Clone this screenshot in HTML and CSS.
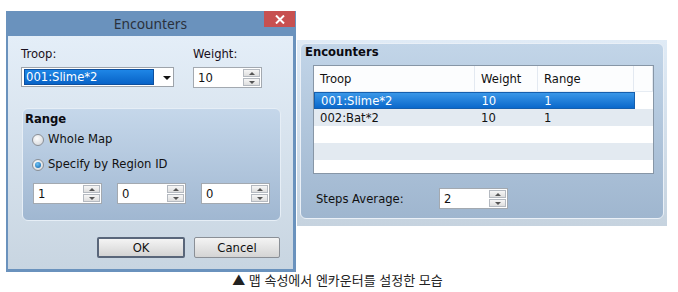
FILE: index.html
```html
<!DOCTYPE html>
<html lang="ko">
<head>
    <meta charset="UTF-8">
    <title>Encounters</title>
    <link rel="stylesheet" href="styles.css">
</head>
<body>
    <div class="stage">
        <div class="dialog">
            <div class="titlebar">
                <span class="title">Encounters</span>
                <span class="close">
                    <svg width="10" height="9" viewBox="0 0 10 9"><path d="M1 0.5 L9 8.5 M9 0.5 L1 8.5" stroke="#fff" stroke-width="2"/></svg>
                </span>
            </div>
            <div class="dialog-body">
                <div class="field-row">
                    <div class="field">
                        <label>Troop:</label>
                        <div class="combo">
                            <span class="combo-sel">001:Slime*2</span>
                            <span class="combo-arrow"></span>
                        </div>
                    </div>
                    <div class="field">
                        <label>Weight:</label>
                        <div class="spin">
                            <span class="spin-val">10</span>
                            <span class="spin-btns"><span class="spin-btn up"></span><span class="spin-btn down"></span></span>
                        </div>
                    </div>
                </div>

                <div class="range">
                    <div class="group-title">Range</div>
                    <div class="radio"><span class="radio-dot"></span>Whole Map</div>
                    <div class="radio"><span class="radio-dot checked"></span>Specify by Region ID</div>
                    <div class="region-row">
                        <div class="spin">
                            <span class="spin-val">1</span>
                            <span class="spin-btns"><span class="spin-btn up"></span><span class="spin-btn down"></span></span>
                        </div>
                        <div class="spin">
                            <span class="spin-val">0</span>
                            <span class="spin-btns"><span class="spin-btn up"></span><span class="spin-btn down"></span></span>
                        </div>
                        <div class="spin">
                            <span class="spin-val">0</span>
                            <span class="spin-btns"><span class="spin-btn up"></span><span class="spin-btn down"></span></span>
                        </div>
                    </div>
                </div>

                <div class="buttons">
                    <button class="btn default">OK</button>
                    <button class="btn cancel">Cancel</button>
                </div>
            </div>
        </div>

        <div class="panel-wrap">
            <div class="panel">
                <div class="group-title">Encounters</div>
                <div class="list">
                    <div class="list-head">
                        <span class="col c-troop">Troop</span>
                        <span class="col c-weight">Weight</span>
                        <span class="col c-range">Range</span>
                        <span class="col c-fill"></span>
                    </div>
                    <div class="list-row selected">
                        <span class="col c-troop">001:Slime*2</span>
                        <span class="col c-weight">10</span>
                        <span class="col c-range">1</span>
                    </div>
                    <div class="list-row alt">
                        <span class="col c-troop">002:Bat*2</span>
                        <span class="col c-weight">10</span>
                        <span class="col c-range">1</span>
                    </div>
                    <div class="list-row"></div>
                    <div class="list-row alt"></div>
                </div>
                <div class="steps-row">
                    <span class="steps-label">Steps Average:</span>
                    <div class="spin">
                        <span class="spin-val">2</span>
                        <span class="spin-btns"><span class="spin-btn up"></span><span class="spin-btn down"></span></span>
                    </div>
                </div>
            </div>
        </div>
    </div>

    <p class="caption">▲ 맵 속성에서 엔카운터를 설정한 모습</p>
</body>
</html>
```

FILE: styles.css
```css
* {
    margin: 0;
    padding: 0;
    box-sizing: border-box;
}

body {
    background: white;
    font-family: 'DejaVu Sans', Verdana, sans-serif;
    font-size: 11.6px;
    color: #111;
    width: 678px;
    height: 292px;
    overflow: hidden;
}

.stage {
    display: flex;
    align-items: flex-start;
    padding: 11px 0 0 6px;
}

/* dialog */
.dialog {
    width: 290px;
    height: 261px;
    background: #6a92bd;
    padding: 0 3px 3px 2px;
    display: flex;
    flex-direction: column;
}

.titlebar {
    position: relative;
    height: 25px;
    display: flex;
    align-items: center;
    justify-content: center;
}

.title {
    font-family: 'Noto Sans', 'Open Sans', sans-serif;
    font-size: 13.8px;
    color: #2a313c;
    margin-top: -1px;
}

.close {
    position: absolute;
    top: 0;
    right: -2px;
    width: 31px;
    height: 16px;
    background: #c75050;
    display: flex;
    align-items: center;
    justify-content: center;
}

.dialog-body {
    flex: 1;
    background: linear-gradient(#e4eef8, #c8d5e1);
    padding: 12px 13px 0 13px;
}

.field-row {
    display: flex;
    gap: 19px;
}

.field label {
    display: block;
    line-height: 13px;
    margin-bottom: 6px;
    color: #1a1020;
}

.combo {
    width: 153px;
    height: 20px;
    background: white;
    border: 1px solid #9da3aa;
    display: flex;
    align-items: center;
    padding: 0 2px;
}

.combo-sel {
    width: 130px;
    height: 16px;
    padding-left: 1px;
    color: white;
    background: linear-gradient(#1e86e6, #0863c7);
    border: 1px solid #0d4f9e;
    line-height: 14px;
}

.combo-arrow {
    margin-left: 9px;
    border-left: 4px solid transparent;
    border-right: 4px solid transparent;
    border-top: 4px solid #111;
    margin-top: 2px;
}

.spin {
    width: 69px;
    height: 21px;
    background: white;
    border: 1px solid #a3a9b0;
    display: flex;
    align-items: center;
    justify-content: space-between;
    padding: 0 1px 0 4px;
}

.spin-btns {
    display: flex;
    flex-direction: column;
    gap: 1px;
}

.spin-btn {
    width: 17px;
    height: 8px;
    border: 1px solid #b4b9c0;
    background: linear-gradient(#f6f6f6, #dedede);
    display: flex;
    align-items: center;
    justify-content: center;
}

.spin-btn::after {
    content: '';
    border-left: 3px solid transparent;
    border-right: 3px solid transparent;
}

.spin-btn.up::after {
    border-bottom: 3px solid #555;
}

.spin-btn.down::after {
    border-top: 3px solid #555;
}

/* range group */
.range {
    margin: 20px 0 0 1px;
    width: 259px;
    height: 113px;
    border: 1px solid #e6eef6;
    border-radius: 6px;
    background: linear-gradient(#c5d7ea, #a0b7d1);
    padding: 4px 0 0 2px;
}

.group-title {
    font-weight: bold;
    line-height: 13px;
    color: #0a0a10;
}

.radio {
    display: flex;
    align-items: center;
    gap: 4px;
    margin-left: 7px;
    height: 13px;
    line-height: 13px;
}

.range .radio:nth-of-type(2) {
    margin-top: 7px;
}

.range .radio:nth-of-type(3) {
    margin-top: 12px;
}

.radio-dot {
    width: 12px;
    height: 12px;
    border-radius: 50%;
    border: 1px solid #8a8f96;
    background: radial-gradient(circle at 40% 35%, #fdfdfd, #cfd2d6);
    display: flex;
    align-items: center;
    justify-content: center;
}

.radio-dot.checked::after {
    content: '';
    width: 6px;
    height: 6px;
    border-radius: 50%;
    background: radial-gradient(circle at 40% 35%, #6ec3f5, #0a5ea8);
}

.region-row {
    display: flex;
    gap: 15px;
    margin: 12px 0 0 8px;
}

.buttons {
    display: flex;
    justify-content: flex-end;
    gap: 9px;
    margin-top: 16px;
}

.btn {
    height: 21px;
    font-family: 'DejaVu Sans', Verdana, sans-serif;
    font-size: 11.6px;
    color: #111;
    background: linear-gradient(#f4f4f4, #e4e4e4 50%, #d4d4d4);
    border: 1px solid #8a8f96;
    border-radius: 2px;
}

.btn.default {
    width: 88px;
    border: 2px solid #59667a;
}

.btn.cancel {
    width: 86px;
}

/* right panel */
.panel-wrap {
    margin-top: 29px;
    margin-left: 1px;
    width: 370px;
    height: 186px;
    background: linear-gradient(#e0ebf6, #c6d3df);
    padding: 3px 3px 7px 3px;
}

.panel {
    height: 100%;
    border: 1px solid #eaf0f7;
    border-radius: 6px;
    background: linear-gradient(#c2d5e8, #9fb6cf);
    padding: 2px 9px 0 4px;
}

.list {
    margin: 6px 0 0 8px;
    height: 109px;
    background: white;
    border: 1px solid #8796a6;
    display: flex;
    flex-direction: column;
}

.list-head {
    display: flex;
    height: 26px;
    flex-shrink: 0;
    background: #fcfdfe;
    border-bottom: 1px solid #e6ecf3;
}

.list-head .col {
    border-right: 1px solid #e3e9f1;
    display: flex;
    align-items: center;
    padding-left: 6px;
    padding-top: 1px;
}

.list-row {
    display: flex;
    height: 17px;
    flex-shrink: 0;
    align-items: center;
}

.list-row .col {
    padding-left: 6px;
}

.c-troop { width: 161px; }
.c-weight { width: 63px; }
.c-range { width: 96px; }
.c-fill { width: 19px; }

.list-row.alt {
    background: #e3eaf1;
}

.list-row.selected {
    width: 321px;
    color: white;
    background: linear-gradient(#3a97e8, #0a68cb);
    border: 1px solid #155fae;
}

.steps-row {
    display: flex;
    align-items: center;
    margin: 14px 0 0 11px;
}

.steps-label {
    width: 123px;
}

.caption {
    font-family: 'Noto Sans CJK KR', sans-serif;
    font-size: 13px;
    color: #222;
    text-align: center;
    margin-top: 1px;
    padding-right: 3px;
    line-height: 14px;
}
```
